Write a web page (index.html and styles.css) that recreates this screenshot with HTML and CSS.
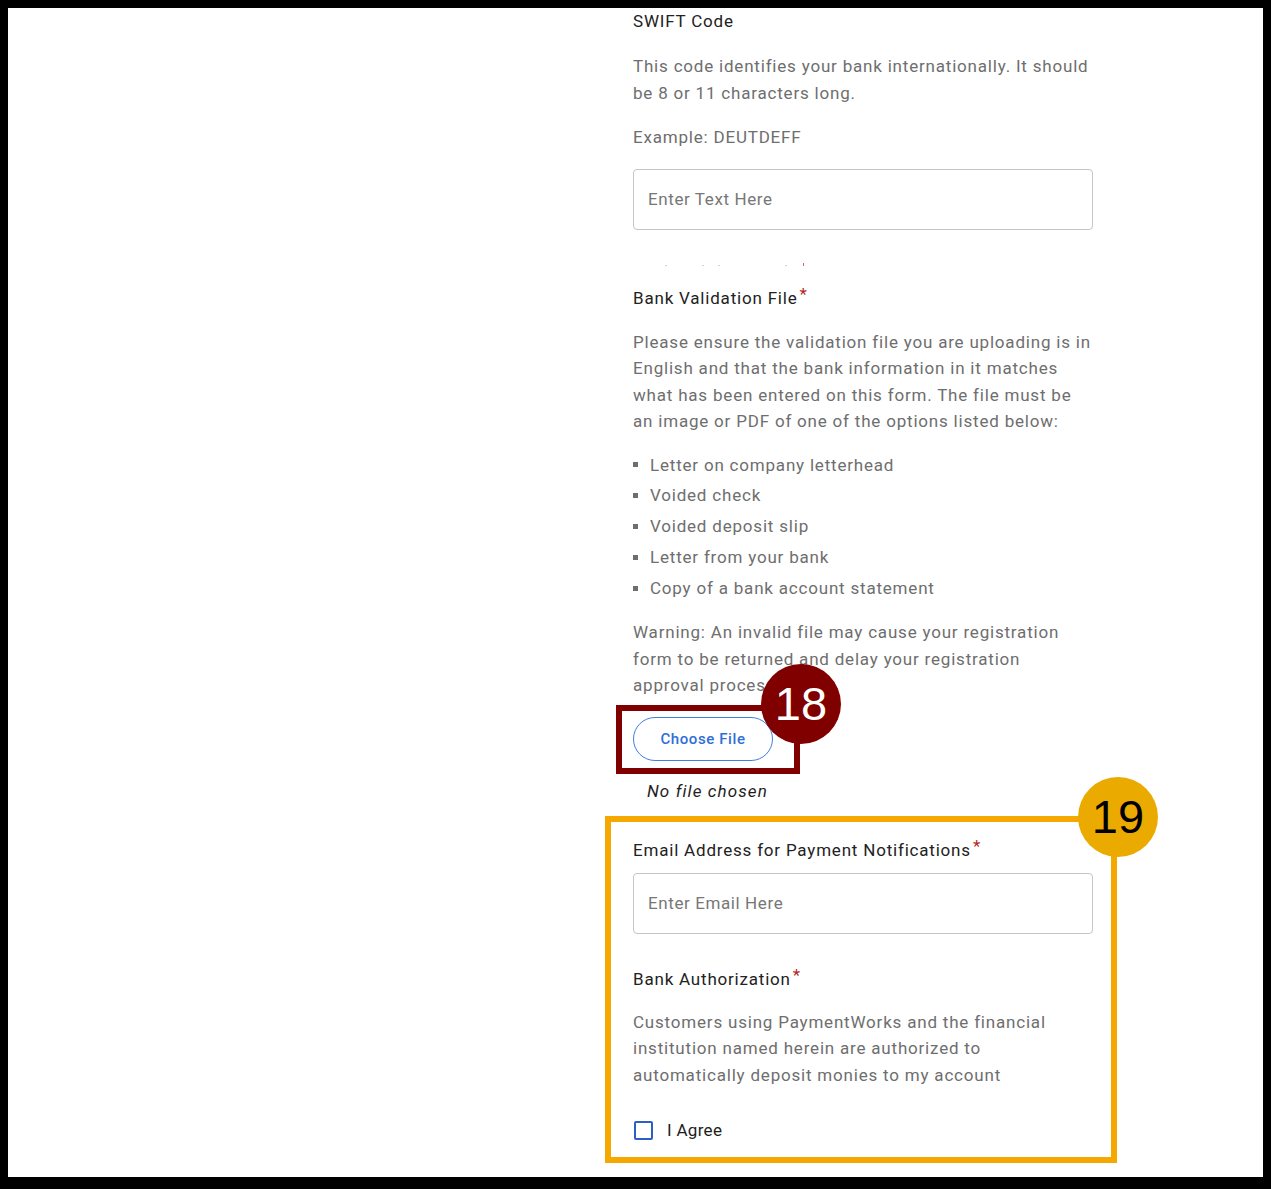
FILE: index.html
```html
<!DOCTYPE html>
<html lang="en">
<head>
    <meta charset="UTF-8">
    <meta name="viewport" content="width=device-width, initial-scale=1.0">
    <title>Bank Details</title>
    <link rel="stylesheet" href="styles.css">
</head>
<body>
    <div class="frame">
        <div class="form-column">
            <div class="field-label">SWIFT Code</div>
            <p class="help first swift">This code identifies your bank internationally. It should be 8 or 11 characters long.</p>
            <p class="help example">Example: DEUTDEFF</p>
            <input type="text" class="text-input" placeholder="Enter Text Here">

            <svg class="clipped" width="460" height="4" viewBox="0 0 460 4">
                <rect x="32" y="2" width="2" height="1" fill="#d0d0d0"/>
                <rect x="69" y="2" width="2" height="1" fill="#d0d0d0"/>
                <rect x="85" y="2" width="2" height="1" fill="#d0d0d0"/>
                <rect x="152" y="2" width="2" height="1" fill="#d0d0d0"/>
                <rect x="170" y="0" width="1" height="3" fill="#c46a6a"/>
            </svg>

            <div class="field-label section">Bank Validation File<span class="req">*</span></div>
            <p class="help first">Please ensure the validation file you are uploading is in English and that the bank information in it matches what has been entered on this form. The file must be an image or PDF of one of the options listed below:</p>
            <ul class="options">
                <li>Letter on company letterhead</li>
                <li>Voided check</li>
                <li>Voided deposit slip</li>
                <li>Letter from your bank</li>
                <li>Copy of a bank account statement</li>
            </ul>
            <p class="help warning">Warning: An invalid file may cause your registration form to be returned and delay your registration approval process.</p>

            <div class="callout callout-red">
                <button class="file-button">Choose File</button>
                <span class="badge badge-red">18</span>
            </div>
            <div class="file-status">No file chosen</div>

            <div class="callout callout-yellow">
                <span class="badge badge-yellow">19</span>
                <div class="field-label">Email Address for Payment Notifications<span class="req">*</span></div>
                <input type="email" class="text-input email" placeholder="Enter Email Here">

                <div class="field-label auth">Bank Authorization<span class="req">*</span></div>
                <p class="help first">Customers using PaymentWorks and the financial institution named herein are authorized to automatically deposit monies to my account</p>

                <label class="agree">
                    <span class="checkbox"></span>
                    I Agree
                </label>
            </div>
        </div>
    </div>
</body>
</html>
```

FILE: styles.css
```css
html, body {
    margin: 0;
    background-color: #000;
}

body {
    padding: 8px 8px 12px 8px;
    font-family: Roboto, 'Liberation Sans', sans-serif;
    letter-spacing: 0.8px;
}

.frame {
    background-color: #fff;
    height: 1169px;
    overflow: hidden;
    padding-left: 625px;
    box-sizing: border-box;
}

.form-column {
    width: 460px;
    padding-top: 1px;
    display: flex;
    flex-direction: column;
    align-items: flex-start;
}

.field-label {
    font-size: 17px;
    line-height: 24px;
    letter-spacing: 0.8px;
    color: #222;
}

.req {
    color: #b3261e;
    margin-left: 2px;
    position: relative;
    top: -4px;
}

.help {
    font-size: 17px;
    line-height: 26.5px;
    color: #6e6e6e;
    margin: 0;
}

.help.first {
    margin-top: 19px;
}

.help.first.swift {
    margin-top: 20px;
}

.help.example {
    margin-top: 18px;
}

.text-input {
    margin-top: 18px;
    width: 460px;
    height: 61px;
    box-sizing: border-box;
    border: 1px solid #c6c6c6;
    border-radius: 4px;
    padding: 0 14px;
    font-family: Roboto, 'Liberation Sans', sans-serif;
    font-size: 17px;
    letter-spacing: 0.6px;
    color: #222;
}

.text-input::placeholder {
    color: #777;
}

.clipped {
    display: block;
    margin-top: 33px;
}

.field-label.section {
    margin-top: 19px;
}

.options {
    list-style: none;
    margin: 15px 0 0 0;
    padding: 0;
}

.options li {
    font-size: 17px;
    line-height: 30.8px;
    color: #6e6e6e;
    display: flex;
    align-items: center;
}

.options li::before {
    content: '';
    width: 5px;
    height: 5px;
    background-color: #6e6e6e;
    margin: 0 12px 0 0;
    flex-shrink: 0;
}

.help.warning {
    margin-top: 16px;
}

.callout {
    position: relative;
    border-style: solid;
    border-width: 6px;
}

.callout-red {
    margin: 6px 0 0 -17px;
    border-color: #800000;
    padding: 6px 21px 7px 11px;
}

.file-button {
    display: block;
    width: 140px;
    height: 44px;
    border: 1px solid #3f7fe0;
    border-radius: 22px;
    background-color: #fff;
    color: #2e6fd7;
    font-family: Roboto, 'Liberation Sans', sans-serif;
    font-size: 15px;
    font-weight: 500;
    letter-spacing: 0.6px;
}

.file-status {
    margin: 5px 0 0 14px;
    font-size: 17px;
    line-height: 24px;
    font-style: italic;
    letter-spacing: 1.1px;
    color: #1e1e1e;
}

.callout-yellow {
    margin: 13px 0 0 -28px;
    border-color: #f5a900;
    width: 478px;
    padding: 16px 0 15px 22px;
}

.badge {
    position: absolute;
    top: -47px;
    right: -47px;
    width: 80px;
    height: 80px;
    border-radius: 50%;
    display: flex;
    align-items: center;
    justify-content: center;
    font-family: 'Liberation Sans', Arial, sans-serif;
    font-size: 47px;
    letter-spacing: 0;
}

.badge-red {
    background-color: #800000;
    color: #fff;
}

.badge-yellow {
    top: -45px;
    background-color: #ebaa00;
    color: #000;
}

.text-input.email {
    margin-top: 11px;
}

.field-label.auth {
    margin-top: 33px;
}

.callout-yellow .help.first {
    margin-top: 18px;
    width: 460px;
}

.agree {
    margin-top: 30px;
    display: flex;
    align-items: center;
    font-size: 17px;
    line-height: 24px;
    color: #1e1e1e;
    letter-spacing: 0.3px;
}

.checkbox {
    width: 19px;
    height: 19px;
    box-sizing: border-box;
    border: 2px solid #2c5fc6;
    border-radius: 2px;
    margin: 0 14px 0 1px;
}
```
